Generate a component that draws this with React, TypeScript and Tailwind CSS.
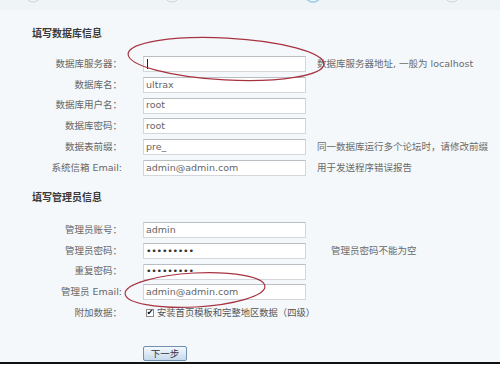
import React from "react";

const cjk = { fontFamily: '"DejaVu Sans", "Noto Sans CJK SC", sans-serif' };

function Row({
  label,
  value,
  hint,
  hintGap = "ml-[11px]",
  password,
}: {
  label: string;
  value: string;
  hint?: string;
  hintGap?: string;
  password?: boolean;
}) {
  return (
    <div className="flex items-center h-[20.8px]">
      <div className="w-[122px] text-right text-[9.5px] text-[#666] whitespace-nowrap">{label}</div>
      <div
        className={`ml-[21px] w-[163px] h-[16px] bg-white border border-[#d3d7da] border-t-[#b9bec2] flex items-center pl-[2px] text-[9.5px] ${
          password ? "text-[#333] tracking-[-0.3px]" : "text-[#666]"
        }`}
      >
        {value === "|" ? <span className="w-px h-[10px] bg-[#222] ml-[1px]" /> : value}
      </div>
      {hint && <div className={`${hintGap} text-[9.5px] text-[#6a6a6a] whitespace-nowrap`}>{hint}</div>}
    </div>
  );
}

export default function App() {
  return (
    <div className="relative w-[500px] h-[365px] bg-[#f4f8fb] overflow-hidden" style={cjk}>
      <div className="h-[10px] bg-[#eff4f7]" />
      <div className="mt-[17px] ml-[32px] h-[14px] leading-[14px] text-[10px] font-bold text-[#3a3a3a]">填写数据库信息</div>
      <div className="mt-[12.6px]">
        <Row label="数据库服务器：" value="|" hint="数据库服务器地址, 一般为 localhost" />
        <Row label="数据库名：" value="ultrax" />
        <Row label="数据库用户名：" value="root" />
        <Row label="数据库密码：" value="root" />
        <Row label="数据表前缀：" value="pre_" hint="同一数据库运行多个论坛时，请修改前缀" />
        <Row label="系统信箱 Email:" value="admin@admin.com" hint="用于发送程序错误报告" />
      </div>
      <div className="mt-[12.6px] ml-[32px] h-[14px] leading-[14px] text-[10px] font-bold text-[#3a3a3a]">填写管理员信息</div>
      <div className="mt-[14.6px]">
        <Row label="管理员账号：" value="admin" />
        <Row label="管理员密码：" value="•••••••••" password hint="管理员密码不能为空" hintGap="ml-[25px]" />
        <Row label="重复密码：" value="•••••••••" password />
        <Row label="管理员 Email:" value="admin@admin.com" />
        <div className="flex items-center h-[20.8px]">
          <div className="w-[122px] text-right text-[9.5px] text-[#666]">附加数据：</div>
          <div className="ml-[24px] w-[8px] h-[8px] border border-[#8a8a8a] bg-white flex items-center justify-center text-[8px] leading-none text-black">
            ✔
          </div>
          <div className="ml-[3px] text-[9.3px] text-[#555] whitespace-nowrap">安装首页模板和完整地区数据（四级）</div>
        </div>
      </div>
      <div className="mt-[22.4px] ml-[143px] w-[44px] h-[15px] border border-[#6f8fb3] rounded-[2px] bg-gradient-to-b from-[#f4f9fd] to-[#c6d9ec] flex items-center justify-center text-[9.5px] text-[#334] leading-none">
        下一步
      </div>
      <div className="mt-[1.5px] h-[2px] bg-[#111]" />
      <div className="h-[10px] bg-white" />

      <svg className="absolute inset-0 pointer-events-none" width="500" height="365" viewBox="0 0 500 365">
        <circle cx="33" cy="-6" r="8" fill="none" stroke="#cdd4d9" strokeWidth="1" />
        <circle cx="172" cy="-6" r="8" fill="none" stroke="#cdd4d9" strokeWidth="1" />
        <circle cx="313" cy="-6" r="8" fill="none" stroke="#9ccbe6" strokeWidth="1.5" />
        <circle cx="452" cy="-6" r="8" fill="none" stroke="#cdd4d9" strokeWidth="1" />
        <ellipse cx="226" cy="59" rx="98" ry="21" transform="rotate(3 226 59)" fill="none" stroke="#a83240" strokeWidth="1.2" />
        <ellipse cx="195" cy="290" rx="70" ry="17" transform="rotate(-3 195 290)" fill="none" stroke="#a83240" strokeWidth="1.2" />
      </svg>
    </div>
  );
}
